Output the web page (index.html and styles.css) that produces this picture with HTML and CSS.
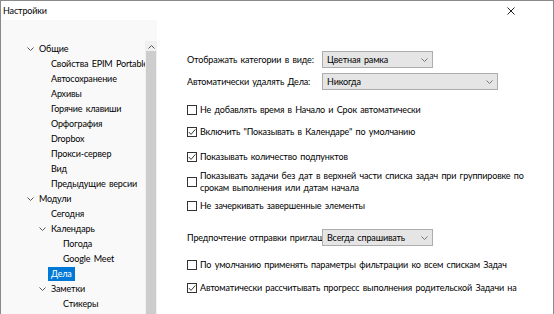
FILE: index.html
```html
<!DOCTYPE html>
<html lang="ru">
<head>
<meta charset="utf-8">
<link rel="stylesheet" href="styles.css">
</head>
<body>
<div class="window">
  <div class="titlebar">
    <span class="title">Настройки</span>
    <svg class="close" width="8" height="8" viewBox="0 0 8 8"><path d="M0.5 0.5L7.5 7.5M7.5 0.5L0.5 7.5" stroke="#222" stroke-width="1" fill="none"/></svg>
  </div>
  <div class="body">
    <div class="sidebar">
      <div class="treebox">
        <ul class="tree">
          <li class="row l0"><span class="exp"><svg width="7" height="4" viewBox="0 0 7 4"><path d="M0.5 0.5L3.5 3.5L6.5 0.5" stroke="#555" fill="none"/></svg></span><span class="txt">Общие</span></li>
          <li class="row l1"><span class="exp"></span><span class="txt">Свойства EPIM Portable</span></li>
          <li class="row l1"><span class="exp"></span><span class="txt">Автосохранение</span></li>
          <li class="row l1"><span class="exp"></span><span class="txt">Архивы</span></li>
          <li class="row l1"><span class="exp"></span><span class="txt">Горячие клавиши</span></li>
          <li class="row l1"><span class="exp"></span><span class="txt">Орфография</span></li>
          <li class="row l1"><span class="exp"></span><span class="txt">Dropbox</span></li>
          <li class="row l1"><span class="exp"></span><span class="txt">Прокси-сервер</span></li>
          <li class="row l1"><span class="exp"></span><span class="txt">Вид</span></li>
          <li class="row l1"><span class="exp"></span><span class="txt">Предыдущие версии</span></li>
          <li class="row l0"><span class="exp"><svg width="7" height="4" viewBox="0 0 7 4"><path d="M0.5 0.5L3.5 3.5L6.5 0.5" stroke="#555" fill="none"/></svg></span><span class="txt">Модули</span></li>
          <li class="row l1"><span class="exp"></span><span class="txt">Сегодня</span></li>
          <li class="row l1"><span class="exp"><svg width="7" height="4" viewBox="0 0 7 4"><path d="M0.5 0.5L3.5 3.5L6.5 0.5" stroke="#555" fill="none"/></svg></span><span class="txt">Календарь</span></li>
          <li class="row l2"><span class="exp"></span><span class="txt">Погода</span></li>
          <li class="row l2"><span class="exp"></span><span class="txt">Google Meet</span></li>
          <li class="row l1"><span class="exp"></span><span class="txt selected">Дела</span></li>
          <li class="row l1"><span class="exp"><svg width="7" height="4" viewBox="0 0 7 4"><path d="M0.5 0.5L3.5 3.5L6.5 0.5" stroke="#555" fill="none"/></svg></span><span class="txt">Заметки</span></li>
          <li class="row l2"><span class="exp"></span><span class="txt">Стикеры</span></li>
        </ul>
        <div class="scrollbar">
          <div class="sb-up"><svg width="7" height="4" viewBox="0 0 7 4"><path d="M0.5 3.5L3.5 0.5L6.5 3.5" stroke="#555" fill="none"/></svg></div>
          <div class="sb-thumb"></div>
        </div>
      </div>
    </div>
    <div class="content">
      <div class="field f-first">
        <span class="flabel">Отображать категории в виде:</span>
        <div class="select s-short"><span>Цветная рамка</span><svg width="7" height="4" viewBox="0 0 7 4"><path d="M0.5 0.5L3.5 3.5L6.5 0.5" stroke="#777" fill="none"/></svg></div>
      </div>
      <div class="field f-second">
        <span class="flabel">Автоматически удалять Дела:</span>
        <div class="select s-long"><span>Никогда</span><svg width="7" height="4" viewBox="0 0 7 4"><path d="M0.5 0.5L3.5 3.5L6.5 0.5" stroke="#777" fill="none"/></svg></div>
      </div>
      <div class="check c1"><span class="box"></span><span class="ctext">Не добавлять время в Начало и Срок автоматически</span></div>
      <div class="check c2"><span class="box"><svg width="8" height="8" viewBox="0 0 8 8"><path d="M0.8 4L3 6.4L7.4 1.4" stroke="#222" stroke-width="0.9" fill="none"/></svg></span><span class="ctext">Включить "Показывать в Календаре" по умолчанию</span></div>
      <div class="check c3"><span class="box"><svg width="8" height="8" viewBox="0 0 8 8"><path d="M0.8 4L3 6.4L7.4 1.4" stroke="#222" stroke-width="0.9" fill="none"/></svg></span><span class="ctext">Показывать количество подпунктов</span></div>
      <div class="check c4 multi"><span class="box"></span><span class="ctext">Показывать задачи без дат в верхней части списка задач при группировке по<br>срокам выполнения или датам начала</span></div>
      <div class="check c5"><span class="box"></span><span class="ctext">Не зачеркивать завершенные элементы</span></div>
      <div class="field f-third">
        <span class="flabel">Предпочтение отправки приглашений</span>
        <div class="select s-short"><span>Всегда спрашивать</span><svg width="7" height="4" viewBox="0 0 7 4"><path d="M0.5 0.5L3.5 3.5L6.5 0.5" stroke="#777" fill="none"/></svg></div>
      </div>
      <div class="check c6"><span class="box"></span><span class="ctext">По умолчанию применять параметры фильтрации ко всем спискам Задач</span></div>
      <div class="check c7"><span class="box"><svg width="8" height="8" viewBox="0 0 8 8"><path d="M0.8 4L3 6.4L7.4 1.4" stroke="#222" stroke-width="0.9" fill="none"/></svg></span><span class="ctext">Автоматически рассчитывать прогресс выполнения родительской Задачи на основе подзадач</span></div>
    </div>
  </div>
</div>
</body>
</html>
```

FILE: styles.css
```css
* { box-sizing: border-box; }
html, body { margin: 0; padding: 0; }
body {
  width: 554px;
  height: 314px;
  overflow: hidden;
  background: #ffffff;
  font-family: "Lato", "Noto Sans", sans-serif;
  font-size: 9px;
  letter-spacing: -0.15px;
  word-spacing: 1.2px;
  color: #000;
}
.window {
  width: 554px;
  height: 314px;
  border-left: 1px solid #8a8a8a;
  border-top: 1px solid #8a8a8a;
  border-right: 1px solid #8a8a8a;
  display: flex;
  flex-direction: column;
  overflow: hidden;
}
.titlebar {
  height: 19px;
  flex: none;
  display: flex;
  align-items: center;
  justify-content: space-between;
  padding: 1px 38px 0 2px;
  background: #fff;
}
.title { font-size: 9px; line-height: 18px; }
.close { display: block; }
.body {
  flex: 1;
  display: flex;
  min-height: 0;
}
.sidebar {
  width: 156px;
  flex: none;
  background: #f9f9f9;
  padding-top: 21px;
  overflow: hidden;
}
.treebox {
  display: flex;
  height: 100%;
}
.tree {
  list-style: none;
  margin: 0;
  padding: 0;
  width: 144px;
  overflow: hidden;
  flex: none;
}
.row {
  height: 15px;
  display: flex;
  align-items: center;
  white-space: nowrap;
}
.l0 { padding-left: 24px; }
.l1 { padding-left: 36px; }
.l2 { padding-left: 48px; }
.exp {
  width: 14px;
  flex: none;
  display: flex;
  align-items: center;
  padding-left: 2px;
}
.exp svg { display: block; }
.txt { line-height: 14px; }
.selected {
  background: #0078d7;
  color: #fff;
  padding: 0 3px;
  margin-left: -3px;
}
.scrollbar {
  width: 12px;
  flex: none;
  background: #f0f0f0;
  display: flex;
  flex-direction: column;
}
.sb-up {
  height: 10px;
  display: flex;
  align-items: center;
  justify-content: center;
  padding-top: 1px;
}
.sb-up svg { display: block; }
.sb-thumb {
  flex: 1;
  margin: 0 1px 0 1px;
  background: #cdcdcd;
}
.content {
  flex: 1;
  padding: 31px 0 0 30px;
  white-space: nowrap;
  overflow: hidden;
}
.field {
  display: flex;
  align-items: center;
  height: 17px;
}
.f-second { margin-top: 5px; }
.f-third { margin-top: 16px; }
.flabel {
  width: 135px;
  flex: none;
  overflow: hidden;
}
.select {
  height: 17px;
  background: #e5e5e5;
  border: 1px solid #adadad;
  display: flex;
  align-items: center;
  justify-content: space-between;
  padding: 0 4px 0 4px;
  flex: none;
}
.select svg { display: block; }
.s-short { width: 111px; }
.s-long { width: 176px; }
.check {
  display: flex;
  align-items: center;
  height: 14px;
}
.box {
  width: 10px;
  height: 10px;
  border: 1px solid #333;
  background: #fff;
  flex: none;
  margin-right: 3px;
  display: flex;
  align-items: center;
  justify-content: center;
}
.box svg { display: block; }
.ctext { line-height: 12px; }
.multi { height: 26px; }
.c1 { margin-top: 13px; }
.c2 { margin-top: 8px; }
.c3 { margin-top: 11px; }
.c4 { margin-top: 5px; }
.c5 { margin-top: 4px; }
.c6 { margin-top: 12px; }
.c7 { margin-top: 9px; width: 333px; overflow: hidden; }
```
